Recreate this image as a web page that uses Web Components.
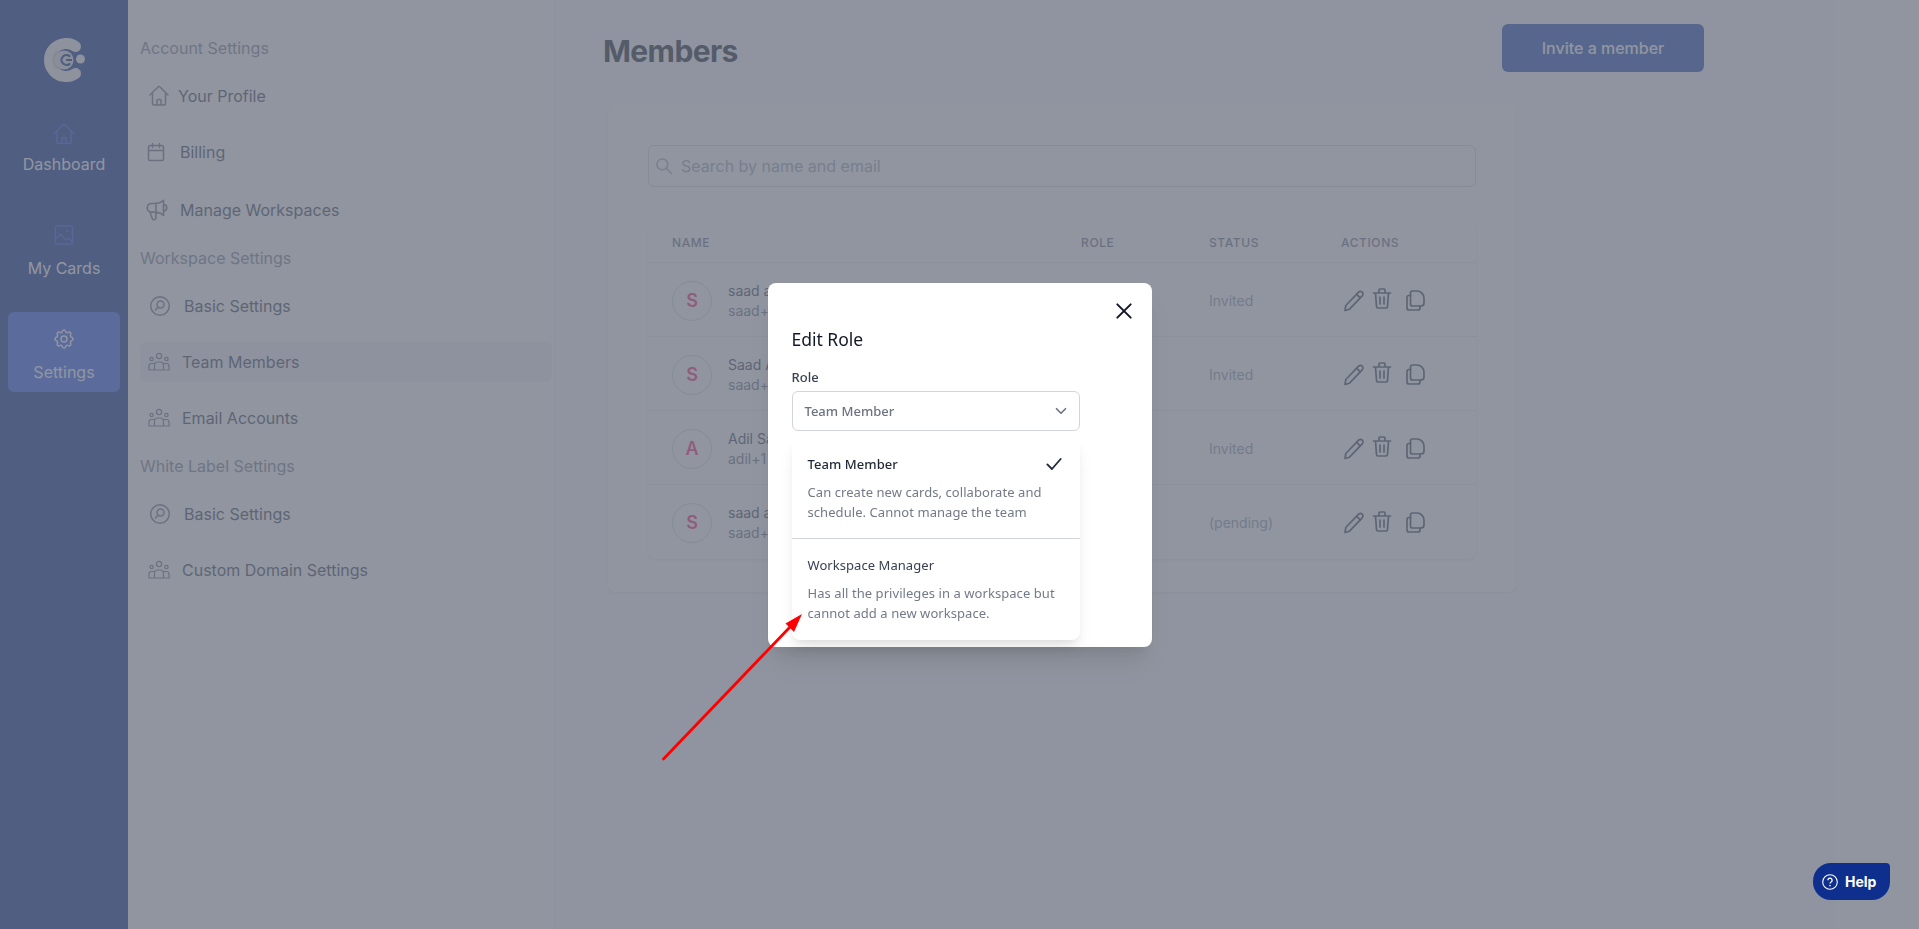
<!DOCTYPE html>
<html>
<head>
<meta charset="utf-8">
<title>Members</title>
<style>
    html, body{ margin:0; height:100%; overflow:hidden; background:#fff; font-family:Inter, "Liberation Sans", sans-serif; }
</style>
</head>
<body>
<team-page>
    <app-rail slot="rail">
        <rail-item icon="home" shade="blue">Dashboard</rail-item>
        <rail-item icon="picture" shade="blue">My Cards</rail-item>
        <rail-item icon="cog" active>Settings</rail-item>
    </app-rail>
    <settings-nav slot="nav">
        <nav-heading>Account Settings</nav-heading>
        <nav-link icon="house" shift="7" gap="7">Your Profile</nav-link>
        <nav-link icon="calendar" shift="4" gap="12">Billing</nav-link>
        <nav-link icon="megaphone" shift="4" gap="10" size="26" style="margin-top:2px">Manage Workspaces</nav-link>
        <nav-heading>Workspace Settings</nav-heading>
        <nav-link icon="badge" shift="8" gap="12">Basic Settings</nav-link>
        <nav-link icon="people" shift="7" gap="11" current>Team Members</nav-link>
        <nav-link icon="people" shift="7" gap="11">Email Accounts</nav-link>
        <nav-heading>White Label Settings</nav-heading>
        <nav-link icon="badge" shift="8" gap="12">Basic Settings</nav-link>
        <nav-link icon="people" shift="7" gap="11">Custom Domain Settings</nav-link>
    </settings-nav>
    <members-main slot="main">
        <member-row letter="S" name="saad a" email="saad+" status="Invited"></member-row>
        <member-row letter="S" name="Saad A" email="saad+" status="Invited"></member-row>
        <member-row letter="A" name="Adil Sa" email="adil+1" status="Invited"></member-row>
        <member-row letter="S" name="saad a" email="saad+" status="(pending)"></member-row>
    </members-main>
</team-page>
<role-modal>
    <role-option title="Team Member" checked>Can create new cards, collaborate and schedule. Cannot manage the team</role-option>
    <role-option title="Workspace Manager">Has all the privileges in a workspace but cannot add a new workspace.</role-option>
</role-modal>
<red-arrow></red-arrow>
<help-button></help-button>

<script>
// outline icons, all drawn on a 24 box
const ICONS = {
    home: '<path d="M2.500 14.500L11 5.800a1.400 1.400 0 0 1 2 0l8.500 8.700M5 12.500v10.500A1.500 1.500 0 0 0 6.500 24.500h11A1.500 1.500 0 0 0 19 23V12.500M10 24.500v-5a1 1 0 0 1 1-1h2a1 1 0 0 1 1 1v5"/>',
    house: '<path d="M3 11L11 3a1.400 1.400 0 0 1 2 0l8 8M5.500 9v10.500A1.500 1.500 0 0 0 7 21h10a1.500 1.500 0 0 0 1.500-1.500V9M10 21v-4.500a1 1 0 0 1 1-1h2a1 1 0 0 1 1 1V21"/>',
    picture: '<rect x="3.500" y="3" width="17" height="18" rx="1.500"/><path d="M3.500 16l5-5 5.500 6 2.500-2 4 4"/><circle cx="15.500" cy="8" r=".6"/>',
    cog: '<path d="M10.325 4.317c.426-1.756 2.924-1.756 3.35 0a1.724 1.724 0 002.573 1.066c1.543-.94 3.31.826 2.37 2.37a1.724 1.724 0 001.065 2.572c1.756.426 1.756 2.924 0 3.35a1.724 1.724 0 00-1.066 2.573c.94 1.543-.826 3.31-2.37 2.37a1.724 1.724 0 00-2.572 1.065c-.426 1.756-2.924 1.756-3.35 0a1.724 1.724 0 00-2.573-1.066c-1.543.94-3.31-.826-2.37-2.37a1.724 1.724 0 00-1.065-2.572c-1.756-.426-1.756-2.924 0-3.35a1.724 1.724 0 001.066-2.573c-.94-1.543.826-3.31 2.37-2.37.996.608 2.296.07 2.572-1.065z"/><path d="M15 12a3 3 0 11-6 0 3 3 0 016 0z"/>',
    calendar: '<rect x="4.500" y="5.500" width="15" height="15" rx="1.500"/><path d="M8.500 3.500v4M15.500 3.500v4M4.500 10.500h15"/>',
    megaphone: '<path d="M11 5.882V19.24a1.76 1.76 0 01-3.417.592l-2.147-6.15M18 13a3 3 0 100-6M5.436 13.683A4.001 4.001 0 017 6h1.832c4.1 0 7.625-1.234 9.168-3v14c-1.543-1.766-5.067-3-9.168-3H7a3.988 3.988 0 01-1.564-.317z"/>',
    badge: '<circle cx="12" cy="12" r="9.300"/><circle cx="12.500" cy="10.500" r="3.500"/><path d="M10 13l-2.500 3"/>',
    people: '<g stroke-width="1.200"><circle cx="12" cy="6" r="2.600"/><circle cx="4.600" cy="9" r="1.700"/><circle cx="19.400" cy="9" r="1.700"/><path d="M7.500 20v-5a3 3 0 0 1 3-3h3a3 3 0 0 1 3 3v5M7.500 13.500H4.500a2.500 2.500 0 0 0-2.500 2.500v4M16.500 13.500h3a2.500 2.500 0 0 1 2.500 2.500v4M2 20h20"/></g>',
    search: '<circle cx="10" cy="10" r="6.500"/><path d="M15 15l6 6"/>',
    pencil: '<path d="M4 22.500l.8-5L17.600 4.200a2.500 2.500 0 0 1 3.600 0 2.500 2.500 0 0 1 0 3.600L8.500 21.200z"/><path d="M15.700 6.300l3.500 3.500"/>',
    trash: '<path d="M3.500 7h17M5.500 7l1 13.500A1.500 1.500 0 0 0 8 22h8a1.500 1.500 0 0 0 1.500-1.500l1-13.500M9 7V4a1 1 0 0 1 1-1h4a1 1 0 0 1 1 1v3M10 11v7M14 11v7"/>',
    copy: '<path d="M9.500 3H14a7 7 0 0 1 7 7v5a3 3 0 0 1-3 3H9.500a2 2 0 0 1-2-2V5a2 2 0 0 1 2-2z"/><path d="M7.500 7.500H6A2 2 0 0 0 4 9.500V20a2 2 0 0 0 2 2h9a2 2 0 0 0 2-2v-2"/>',
    chevron: '<path d="M6 9l6 6 6-6"/>',
    check: '<path d="M4 12.500l5.500 5.500L20 6"/>',
    close: '<path d="M4 4l16 16M20 4L4 20"/>'
};

class AppIcon extends HTMLElement{
    constructor(){
        super();
        const root = this.attachShadow({mode:'open'});
        const size = this.getAttribute('size') || 24;
        const sw = this.getAttribute('stroke') || 1.5;
        root.innerHTML = `
        <style>
            :host{ display:block; width:${size}px; height:${size}px; flex:none; }
            svg{ display:block; overflow:visible; }
        </style>
        <svg width="${size}" height="${size}" viewBox="0 0 24 24" fill="none" stroke="currentColor"
             stroke-width="${sw}" stroke-linecap="round" stroke-linejoin="round">${ICONS[this.getAttribute('name')] || ''}</svg>`;
    }
}
customElements.define('app-icon', AppIcon);

class TeamPage extends HTMLElement{
    constructor(){
        super();
        this.attachShadow({mode:'open'}).innerHTML = `
        <style>
            :host{ display:flex; height:100vh; }
        </style>
        <slot name="rail"></slot>
        <slot name="nav"></slot>
        <slot name="main"></slot>`;
    }
}
customElements.define('team-page', TeamPage);

class AppRail extends HTMLElement{
    constructor(){
        super();
        this.attachShadow({mode:'open'}).innerHTML = `
        <style>
            :host{ display:flex; flex-direction:column; width:128px; flex:none; background:#032688; box-sizing:border-box; padding:38px 8px 0; }
            #logo{ display:block; margin:0 0 22px 36px; }
            #items{ display:flex; flex-direction:column; gap:24px; }
        </style>
        <svg id="logo" width="44" height="44" viewBox="44 38 44 44">
            <circle cx="64" cy="60" r="9.500" fill="#e4e4e4"/>
            <path d="M75.500 46.500A16.500 16.500 0 1 0 75.500 73.500" fill="none" stroke="#f2f2f2" stroke-width="11" stroke-linecap="round"/>
            <path d="M57 52a11 11 0 0 0 0 16" fill="none" stroke="#cfcfcf" stroke-width="2.500" stroke-linecap="round"/>
            <path d="M69.500 56a5 5 0 1 0 0 8" fill="none" stroke="#032688" stroke-width="2.200" stroke-linecap="round"/>
            <path d="M66 60h6" stroke="#032688" stroke-width="2"/>
            <circle cx="80.500" cy="59" r="4.500" fill="#f2f2f2"/>
        </svg>
        <div id="items"><slot></slot></div>`;
    }
}
customElements.define('app-rail', AppRail);

class RailItem extends HTMLElement{
    constructor(){
        super();
        const root = this.attachShadow({mode:'open'});
        const iconColor = this.getAttribute('shade') === 'blue' ? '#1a4be0' : '#fff';
        root.innerHTML = `
        <style>
            :host{ display:flex; flex-direction:column; align-items:center; height:80px; box-sizing:border-box; padding-top:15px; gap:9px; border-radius:6px; color:#fff; font-size:16px; line-height:24px; }
            :host([active]){ background:#2a5af0; }
            app-icon{ color:${iconColor}; }
        </style>
        <app-icon name="${this.getAttribute('icon')}"></app-icon>
        <span><slot></slot></span>`;
    }
}
customElements.define('rail-item', RailItem);

class SettingsNav extends HTMLElement{
    constructor(){
        super();
        this.attachShadow({mode:'open'}).innerHTML = `
        <style>
            :host{ display:flex; flex-direction:column; gap:16px; width:427px; flex:none; box-sizing:border-box; padding:36px 2px 0 12px; border-right:1px solid #f3f4f6; background:#fff; }
        </style>
        <slot></slot>`;
    }
}
customElements.define('settings-nav', SettingsNav);

class NavHeading extends HTMLElement{
    constructor(){
        super();
        this.attachShadow({mode:'open'}).innerHTML = `
        <style>
            :host{ display:block; font-size:16px; line-height:24px; color:#7a8090; }
        </style>
        <slot></slot>`;
    }
}
customElements.define('nav-heading', NavHeading);

class NavLink extends HTMLElement{
    constructor(){
        super();
        const shift = this.getAttribute('shift') || 8;
        const gap = this.getAttribute('gap') || 10;
        const size = this.getAttribute('size') || 24;
        this.attachShadow({mode:'open'}).innerHTML = `
        <style>
            :host{ display:flex; align-items:center; height:40px; box-sizing:border-box; padding-left:${shift}px; gap:${gap}px; border-radius:6px; font-size:16px; color:#374151; }
            :host([current]){ background:#f3f4f6; }
            app-icon{ color:#6b7280; }
        </style>
        <app-icon name="${this.getAttribute('icon')}" size="${size}"></app-icon>
        <span><slot></slot></span>`;
    }
}
customElements.define('nav-link', NavLink);

class MembersMain extends HTMLElement{
    constructor(){
        super();
        this.attachShadow({mode:'open'}).innerHTML = `
        <style>
            :host{ display:block; width:1280px; flex:none; box-sizing:border-box; padding:24px 0 0 48px; background:#fcfcfd; font-size:14px; }
            #top{ display:flex; justify-content:space-between; align-items:flex-start; width:1101px; height:48px; }
            h1{ margin:9px 0 0; font-size:30px; line-height:36px; font-weight:700; letter-spacing:-.02em; color:#111827; }
            button{ width:202px; height:48px; border:0; border-radius:6px; background:#1f46b0; color:#fff; font:500 16px Inter, sans-serif; }
            #card{ width:908px; margin:33px 0 0 5px; box-sizing:border-box; height:487px; padding:40px; background:#fff; border-radius:8px; box-shadow:0 1px 3px rgba(0,0,0,.1); }
            #search{ display:flex; align-items:center; gap:7px; height:42px; box-sizing:border-box; padding-left:5px; border:1px solid #d1d5db; border-radius:6px; font-size:16px; color:#9ca3af; }
            #table{ margin-top:36px; border-radius:8px; box-shadow:0 1px 3px rgba(0,0,0,.1); }
            #head{ display:grid; grid-template-columns:409px 128px 132px 1fr; align-items:center; height:40px; padding:0 24px; box-sizing:border-box; border-bottom:1px solid #ebedf0; font-size:12px; font-weight:500; letter-spacing:.05em; color:#6b7280; text-transform:uppercase; }
        </style>
        <div id="top">
            <h1>Members</h1>
            <button>Invite a member</button>
        </div>
        <div id="card">
            <div id="search"><app-icon name="search" size="20" stroke="1.800"></app-icon><span>Search by name and email</span></div>
            <div id="table">
                <div id="head"><span>Name</span><span>Role</span><span>Status</span><span>Actions</span></div>
                <slot></slot>
            </div>
        </div>`;
    }
}
customElements.define('members-main', MembersMain);

class MemberRow extends HTMLElement{
    constructor(){
        super();
        const a = n => this.getAttribute(n);
        this.attachShadow({mode:'open'}).innerHTML = `
        <style>
            :host{ display:grid; grid-template-columns:409px 128px 132px 1fr; align-items:center; height:74px; box-sizing:border-box; padding:2px 24px 0; border-bottom:1px solid #ebedf0; font-size:14px; line-height:20px; }
            :host(:last-child){ border-bottom:0; }
            #who{ display:flex; align-items:center; gap:16px; }
            #avatar{ width:40px; height:40px; box-sizing:border-box; display:flex; align-items:center; justify-content:center; border:1px solid #d1d5db; border-radius:50%; color:#ff1f70; font-size:18px; font-weight:600; }
            #name{ color:#374151; }
            #email{ color:#6b7280; }
            #status{ color:#9097a5; }
            #actions{ display:flex; align-items:center; color:#374151; margin-top:-2px; }
            #actions app-icon:nth-child(2){ margin:-3px 9px 0 5px; }
        </style>
        <div id="who">
            <div id="avatar">${a('letter')}</div>
            <div><div id="name">${a('name')}</div><div id="email">${a('email')}</div></div>
        </div>
        <span></span>
        <span id="status">${a('status')}</span>
        <div id="actions">
            <app-icon name="pencil" stroke="1.700"></app-icon>
            <app-icon name="trash" stroke="1.700"></app-icon>
            <app-icon name="copy" stroke="1.700"></app-icon>
        </div>`;
    }
}
customElements.define('member-row', MemberRow);

class RoleModal extends HTMLElement{
    constructor(){
        super();
        this.attachShadow({mode:'open'}).innerHTML = `
        <style>
            :host{ position:fixed; inset:0; display:flex; align-items:center; justify-content:center; background:rgba(107,114,128,.75); font-family:"Noto Sans", sans-serif; }
            #box{ width:384px; height:364px; box-sizing:border-box; padding:21px 24px 0; background:#fff; border-radius:8px; box-shadow:0 20px 25px -5px rgba(0,0,0,.1), 0 10px 10px -5px rgba(0,0,0,.04); }
            #close{ display:flex; justify-content:flex-end; height:14px; color:#111827; margin-right:-6px; }
            #close app-icon{ margin-top:-3px; }
            h3{ margin:8px 0 13px; height:28px; font-size:17.500px; line-height:26px; font-weight:400; color:#111827; }
            label{ display:block; font-size:13px; line-height:20px; font-weight:500; color:#374151; margin-bottom:4px; }
            #select{ display:flex; align-items:center; justify-content:space-between; width:288px; height:40px; box-sizing:border-box; padding:0 9px 0 12px; border:1px solid #d1d5db; border-radius:6px; font-size:13px; font-weight:500; color:#6b7280; }
            #list{ width:288px; margin-top:7px; border-radius:8px; background:#fff; box-shadow:0 10px 15px -3px rgba(0,0,0,.1), 0 4px 6px -2px rgba(0,0,0,.05); }
        </style>
        <div id="box">
            <div id="close"><app-icon name="close" size="20" stroke="2.400"></app-icon></div>
            <h3>Edit Role</h3>
            <label>Role</label>
            <div id="select"><span>Team Member</span><app-icon name="chevron" size="18" stroke="2.200"></app-icon></div>
            <div id="list"><slot></slot></div>
        </div>`;
    }
}
customElements.define('role-modal', RoleModal);

class RoleOption extends HTMLElement{
    constructor(){
        super();
        const check = this.hasAttribute('checked') ? '<app-icon name="check" size="20" stroke="2.200"></app-icon>' : '';
        this.attachShadow({mode:'open'}).innerHTML = `
        <style>
            :host{ display:block; box-sizing:border-box; height:101px; padding:16px; border-bottom:1px solid #d1d5db; font-size:13px; line-height:20px; letter-spacing:.06px; color:#737a87; }
            :host(:last-child){ border-bottom:0; }
            #title{ display:flex; align-items:center; justify-content:space-between; height:20px; margin-bottom:8px; color:#1f2937; font-weight:500; }
            :host(:not([checked])) #title{ font-weight:400; color:#374151; }
        </style>
        <div id="title"><span>${this.getAttribute('title')}</span>${check}</div>
        <div><slot></slot></div>`;
    }
}
customElements.define('role-option', RoleOption);

class RedArrow extends HTMLElement{
    constructor(){
        super();
        this.attachShadow({mode:'open'}).innerHTML = `
        <style>
            :host{ position:fixed; inset:0; pointer-events:none; }
            svg{ display:block; }
        </style>
        <svg width="1919" height="929">
            <path d="M663.500 759L790 627" stroke="#f00" stroke-width="2.800" stroke-linecap="round"/>
            <path d="M802 614L785.500 623.500 794 632z" fill="#f00"/>
        </svg>`;
    }
}
customElements.define('red-arrow', RedArrow);

class HelpButton extends HTMLElement{
    constructor(){
        super();
        this.attachShadow({mode:'open'}).innerHTML = `
        <style>
            :host{ position:fixed; right:29px; bottom:29px; display:flex; align-items:center; gap:7px; width:77px; height:37px; box-sizing:border-box; padding-left:9px; background:#0f2f8f; border-radius:18px 4px 18px 18px; color:#fff; font:700 14px Inter, sans-serif; }
            svg{ display:block; }
        </style>
        <svg width="16" height="16" viewBox="0 0 16 16" fill="none" stroke="#fff" stroke-width="1.100">
            <circle cx="8" cy="8" r="7.300"/>
            <path d="M5.900 6.200a2.100 2.100 0 1 1 3.200 1.800c-.7.400-1.100.8-1.100 1.600" stroke-width="1.300"/>
            <circle cx="8" cy="11.600" r=".8" fill="#fff" stroke="none"/>
        </svg>
        <span>Help</span>`;
    }
}
customElements.define('help-button', HelpButton);
</script>
</body>
</html>
